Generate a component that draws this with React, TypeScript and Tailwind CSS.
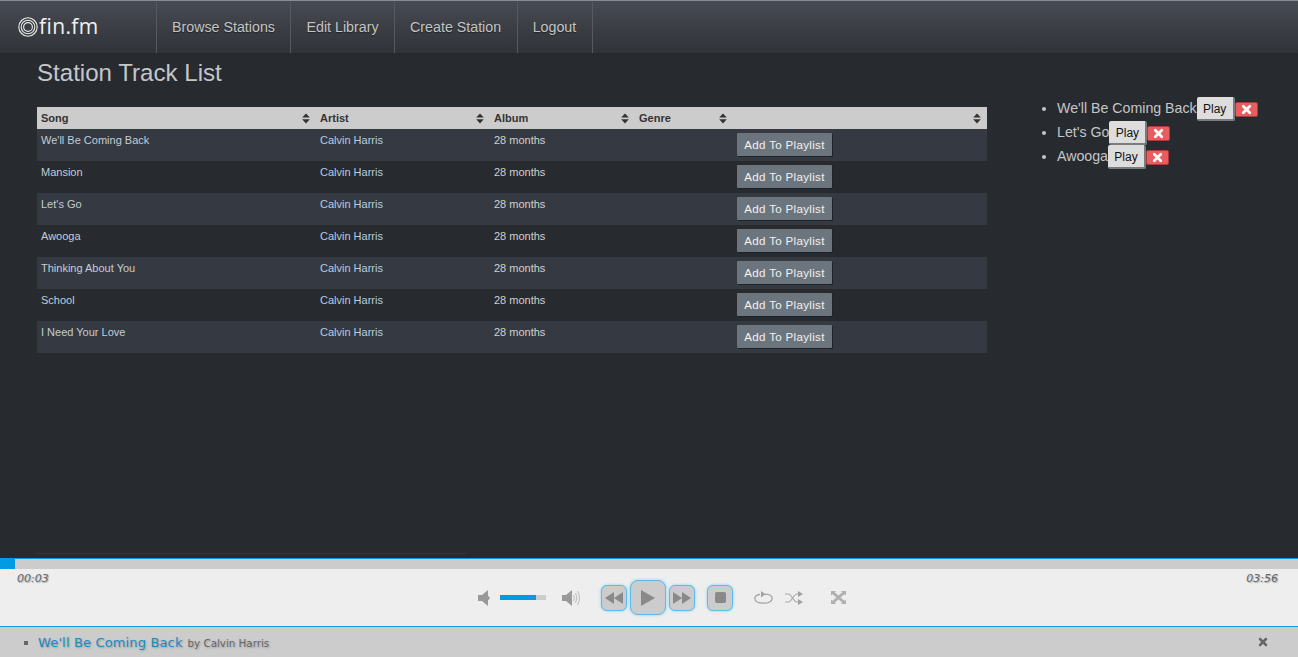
import { X } from "lucide-react"

const tracks = ["We'll Be Coming Back", "Mansion", "Let's Go", "Awooga", "Thinking About You", "School", "I Need Your Love"]
const queue = [
  { title: "We'll Be Coming Back" },
  { title: "Let's Go" },
  { title: "Awooga" },
]
const navItems = ["Browse Stations", "Edit Library", "Create Station", "Logout"]

function SortIcon() {
  return (
    <svg width="8" height="11" viewBox="0 0 8 11" className="shrink-0 fill-[#333]">
      <path d="M4 0.5 L7.8 4.6 H0.2 Z M0.2 6.2 H7.8 L4 10.4 Z" />
    </svg>
  )
}

function Logo() {
  return (
    <svg width="20" height="20" viewBox="0 0 20 20" fill="none" stroke="#e8e8e8" strokeWidth="1.1">
      <circle cx="10" cy="10" r="9.2" />
      <circle cx="10" cy="10" r="6.8" />
      <circle cx="10" cy="10" r="4.4" />
    </svg>
  )
}

function HeaderCell({ label, width }: { label: string; width: string }) {
  return (
    <th className={`${width} h-[22px] p-0`}>
      <div className="flex items-center justify-between pl-1 pr-[6px] text-left text-[11px] font-bold text-[#333]">
        <span>{label}</span>
        <SortIcon />
      </div>
    </th>
  )
}

function SpeakerMin() {
  return (
    <svg width="12" height="18" viewBox="0 0 12 18" className="fill-[#999] blur-[0.3px]">
      <path d="M0 6 H4 L10 1 V6.5 L12 9 L10 11.5 V17 L4 12 H0 Z" />
    </svg>
  )
}

function SpeakerMax() {
  return (
    <svg width="19" height="18" viewBox="0 0 19 18" className="fill-[#999] blur-[0.3px]">
      <path d="M0 6 H4 L10 1 V17 L4 12 H0 Z" />
      <g fill="none" stroke="#bbb" strokeWidth="1">
        <path d="M11.5 6 Q13.5 9 11.5 12" />
        <path d="M13.5 4 Q16.5 9 13.5 14" />
        <path d="M15.5 2 Q19.5 9 15.5 16" />
      </g>
    </svg>
  )
}

function TransportButton({ big, children }: { big?: boolean; children: React.ReactNode }) {
  return (
    <button
      className={`flex items-center justify-center border border-[#5cbcec] bg-[#cccccc] shadow-[0_0_3px_#7fcdf2] ${
        big ? "h-[35px] w-[36px] rounded-[8px]" : "h-[26px] w-[26px] rounded-[6px]"
      }`}
    >
      {children}
    </button>
  )
}

export default function App() {
  return (
    <div className="flex h-[657px] w-[1298px] flex-col overflow-hidden bg-[#272a2f] font-['Liberation_Sans',sans-serif]">
      {/* nav */}
      <nav className="flex h-[53px] shrink-0 border-t border-t-[#8a8d90] bg-gradient-to-b from-[#474b53] to-[#303338] pt-[1px]">
        <div className="flex w-[156px] items-center gap-[1px] pb-[2px] pl-[18px]">
          <Logo />
          <span className="font-['Open_Sans',sans-serif] text-[21px] font-medium tracking-[0.4px] text-[#f0f0f0]">fin.fm</span>
        </div>
        {navItems.map((item) => (
          <a
            key={item}
            className="flex items-center border-l border-l-[#575a60] pl-[15px] pr-[15.5px] text-[14.25px] text-[#c4c4c4] [text-shadow:0_1px_1px_#222] last:border-r last:border-r-[#575a60]"
          >
            {item}
          </a>
        ))}
      </nav>

      {/* main */}
      <main className="flex min-h-0 flex-1 flex-col">
        <div className="flex flex-1">
          <section className="ml-[37px] w-[950px]">
            <h1 className="mt-[5px] mb-[19px] text-[24.1px] leading-[30px] text-[#c4c6c8]">Station Track List</h1>
            <table className="w-[950px] table-fixed border-collapse">
              <thead>
                <tr className="bg-[#cccccc]">
                  <HeaderCell label="Song" width="w-[279px]" />
                  <HeaderCell label="Artist" width="w-[174px]" />
                  <HeaderCell label="Album" width="w-[145px]" />
                  <HeaderCell label="Genre" width="w-[98px]" />
                  <HeaderCell label="" width="w-[254px]" />
                </tr>
              </thead>
              <tbody>
                {tracks.map((track) => (
                  <tr key={track} className="h-[32px] align-top odd:bg-[#353a42] even:bg-[#272a2f]">
                    <td className="pl-1 pt-[5px] text-[11px] leading-[13px] text-[#c4ccd6]">{track}</td>
                    <td className="pl-1 pt-[5px] text-[11px] leading-[13px] text-[#b4cce4]">Calvin Harris</td>
                    <td className="pl-1 pt-[5px] text-[11px] leading-[13px] text-[#d4d0c6]">28 months</td>
                    <td />
                    <td className="pl-1 pt-[4px]">
                      <button className="block h-[23px] w-[95px] rounded-[1px] bg-[#6c757d] pt-[1px] text-[11.6px] leading-[22px] tracking-[0.3px] text-[#f2f2f2] shadow-[1px_1px_0_#1f2226]">
                        Add To Playlist
                      </button>
                    </td>
                  </tr>
                ))}
              </tbody>
            </table>
          </section>

          <ul className="ml-[70px] mt-[44px] list-disc pl-0 text-[14.2px] text-[#c4c6c8] marker:text-[#c4c6c8]">
            {queue.map((item) => (
              <li key={item.title} className="h-6">
                <div className="flex items-center">
                  <span>{item.title}</span>
                  <button className="h-[24px] w-[38px] rounded-[2px] border-r-2 border-b-2 border-[#7b7b7b] bg-[#dddddd] pt-[2px] text-[12px] text-[#111]">
                    Play
                  </button>
                  <button className="mt-[1px] flex h-[15px] w-[23px] items-center justify-center rounded-[2px] border border-[#a83c3c] bg-[#e85d5d]">
                    <X size={13} strokeWidth={5} className="text-white" />
                  </button>
                </div>
              </li>
            ))}
          </ul>
        </div>
        <div className="mb-[4px] ml-[37px] h-px w-[429px] bg-[#33373d]" />
      </main>

      {/* player */}
      <footer className="shrink-0 font-['DejaVu_Sans',sans-serif]">
        <div className="h-[11px] border-t border-t-[#0f9ae0] bg-[#cccccc]">
          <div className="h-full w-[15px] bg-[#009be3]" />
        </div>
        <div className="h-[57px] bg-[#eeeeee] [text-shadow:1px_1px_1px_#aaa]">
          <div className="flex justify-between px-[17px] pr-[20px] pt-[3px] text-[11px] leading-[13px] text-[#666] italic">
            <span>00:03</span>
            <span>03:56</span>
          </div>
          <div className="mt-[-5px] flex items-center pl-[478px]">
            <SpeakerMin />
            <div className="ml-[10px] h-[5px] w-[46px] bg-[#cccccc]">
              <div className="h-full w-[36px] bg-[#009be3]" />
            </div>
            <div className="ml-[16px]">
              <SpeakerMax />
            </div>
            <div className="ml-[20px]">
              <TransportButton>
                <svg width="18" height="12" viewBox="0 0 18 12" className="fill-[#8a8a8a] blur-[0.3px]">
                  <path d="M9 0 V12 L0 6 Z M18 0 V12 L9 6 Z" />
                </svg>
              </TransportButton>
            </div>
            <div className="ml-[3px]">
              <TransportButton big>
                <svg width="14" height="16" viewBox="0 0 14 16" className="fill-[#8a8a8a] blur-[0.3px]">
                  <path d="M0 0 L14 8 L0 16 Z" />
                </svg>
              </TransportButton>
            </div>
            <div className="ml-[3px]">
              <TransportButton>
                <svg width="18" height="12" viewBox="0 0 18 12" className="fill-[#8a8a8a] blur-[0.3px]">
                  <path d="M0 0 L9 6 L0 12 Z M9 0 L18 6 L9 12 Z" />
                </svg>
              </TransportButton>
            </div>
            <div className="ml-[12px]">
              <TransportButton>
                <div className="h-[11px] w-[11px] rounded-[2px] bg-[#8a8a8a]" />
              </TransportButton>
            </div>
            <svg width="19" height="14" viewBox="0 0 19 14" className="ml-[21px] blur-[0.3px]" fill="none">
              <path d="M6 3.3 C2.5 3.6 .8 5.3 .8 7.6 C.8 10.4 4.5 12.2 9.5 12.2 C14.5 12.2 18.2 10.4 18.2 7.6 C18.2 5 15.5 3.4 11 3.2" stroke="#a0a0a0" strokeWidth="1.2" />
              <path d="M7 0 L11.5 3.2 L7 6.5 Z" fill="#a0a0a0" />
            </svg>
            <svg width="18" height="14" viewBox="0 0 18 14" className="ml-[12px] blur-[0.3px]" fill="none">
              <path d="M0 3 H3.5 C6.5 3 8.5 11 12 11 H14 M0 11 H3.5 C6.5 11 8.5 3 12 3 H14" stroke="#aaa" strokeWidth="1.2" />
              <path d="M13 0 L18 3 L13 6 Z M13 8 L18 11 L13 14 Z" fill="#a0a0a0" />
            </svg>
            <svg width="15" height="13" viewBox="0 0 15 13" className="ml-[28px] fill-[#b0b0b0] blur-[0.4px]">
              <path d="M0 0 H5 L3.8 1.4 L7.5 4.6 L11.2 1.4 L10 0 H15 V4.6 L13.4 3.2 L9.6 6.5 L13.4 9.8 L15 8.4 V13 H10 L11.2 11.6 L7.5 8.4 L3.8 11.6 L5 13 H0 V8.4 L1.6 9.8 L5.4 6.5 L1.6 3.2 L0 4.6 Z" />
            </svg>
          </div>
        </div>
        <div className="flex h-[31px] items-center justify-between border-t border-t-[#0f9ae0] bg-[#cccccc] pl-[24px] pr-[29px] [text-shadow:1px_1px_2px_#999]">
          <div className="mt-[1px] flex items-center">
            <span className="mr-[10px] h-1 w-1 bg-[#666]" />
            <span className="text-[13px] tracking-[0.15px] text-[#1a8cc4]">We'll Be Coming Back</span>
            <span className="ml-[5px] mt-[2px] text-[10.3px] text-[#666]">by Calvin Harris</span>
          </div>
          <X size={12} strokeWidth={5} className="text-[#666]" />
        </div>
      </footer>
    </div>
  )
}
